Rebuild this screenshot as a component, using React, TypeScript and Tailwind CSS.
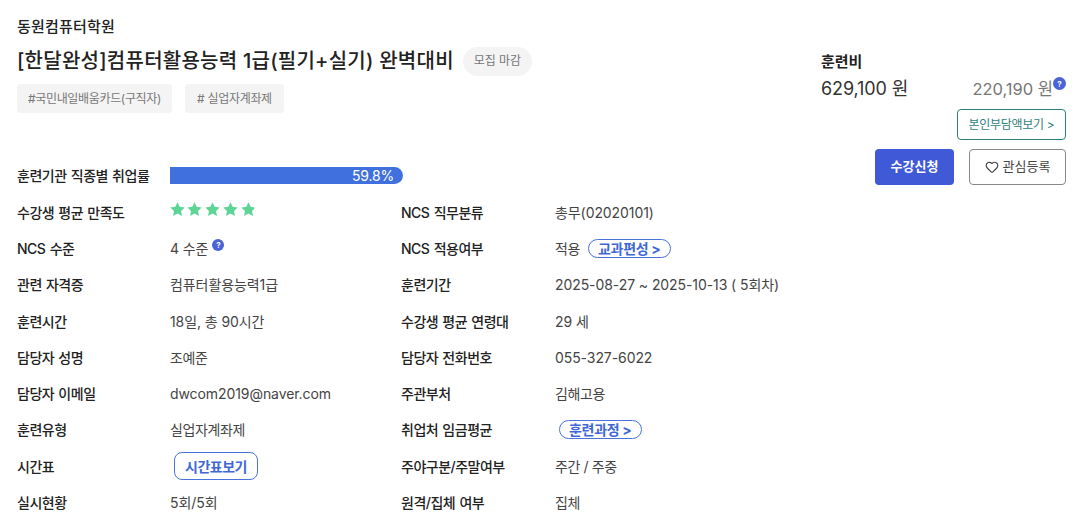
import React from 'react';
import { Heart } from 'lucide-react';

const font = 'font-["Inter","Noto_Sans_CJK_KR",sans-serif]';

const Help = ({ className = '', size = 'w-3 h-3' }: { className?: string; size?: string }) => (
  <span className={`inline-flex ${size} items-center justify-center rounded-full bg-[#4a63d8] text-white text-[8px] leading-none font-bold ${className}`}>
    ?
  </span>
);

const STAR = 'M12 .5L15.500 7.600 23.400 8.800 17.700 14.350 19.050 22.200 12 18.500 4.950 22.200 6.300 14.350 .6 8.800 8.500 7.600z';

const Star = ({ fill = '#5fd497' }: { fill?: string }) => (
  <svg viewBox="0 0 24 24" className="w-[15px] h-[15px]">
    <path d={STAR} fill={fill} />
  </svg>
);

const PartStar = () => (
  <svg viewBox="0 0 24 24" className="w-[15px] h-[15px]">
    <defs>
      <linearGradient id="part">
        <stop offset="0.86" stopColor="#5fd497" />
        <stop offset="0.86" stopColor="#dddddd" />
      </linearGradient>
    </defs>
    <path d={STAR} fill="url(#part)" />
  </svg>
);

const PillLink = ({ label }: { label: string }) => (
  <span className="inline-flex items-center h-[19px] px-[9px] rounded-full border border-[#4a73d9] text-[#3f68d6] text-[14px] tracking-[-0.3px] font-bold whitespace-nowrap">
    {label}
  </span>
);

const Label = ({ children }: { children: React.ReactNode }) => (
  <div className="text-[14px] tracking-[-0.5px] [word-spacing:1px] font-medium text-[#222] whitespace-nowrap">{children}</div>
);

const Value = ({ children }: { children: React.ReactNode }) => (
  <div className="flex items-center text-[14px] tracking-[-0.08px] text-[#444] whitespace-nowrap">{children}</div>
);

// Korean-only values sit a little tighter than the ones with digits
const Ko = ({ children }: { children: React.ReactNode }) => (
  <span className="tracking-[-0.4px]">{children}</span>
);

const rows: [string, React.ReactNode, string, React.ReactNode][] = [
  [
    '수강생 평균 만족도',
    <div className="flex gap-[2.800px] -mt-[6px] -ml-[0.500px]">
      <Star /><Star /><Star /><Star /><PartStar />
    </div>,
    'NCS 직무분류',
    '총무(02020101)',
  ],
  [
    'NCS 수준',
    <>4 수준<Help className="ml-[4px] -mt-[6px]" /></>,
    'NCS 적용여부',
    <><Ko>적용</Ko><span className="ml-[8px]"><PillLink label="교과편성 >" /></span></>,
  ],
  ['관련 자격증', '컴퓨터활용능력1급', '훈련기간', '2025-08-27 ~ 2025-10-13 ( 5회차)'],
  ['훈련시간', '18일, 총 90시간', '수강생 평균 연령대', '29 세'],
  ['담당자 성명', <Ko>조예준</Ko>, '담당자 전화번호', '055-327-6022'],
  ['담당자 이메일', 'dwcom2019@naver.com', '주관부처', <Ko>김해고용</Ko>],
  [
    '훈련유형',
    <Ko>실업자계좌제</Ko>,
    '취업처 임금평균',
    <span className="ml-[4px]"><PillLink label="훈련과정 >" /></span>,
  ],
  [
    '시간표',
    <span className="ml-[4px] inline-flex items-center h-[28px] px-[10px] rounded-[8px] border border-[#4a73d9] text-[#3f68d6] text-[14px] tracking-[-0.5px] font-bold">
      시간표보기
    </span>,
    '주야구분/주말여부',
    <Ko>주간 / 주중</Ko>,
  ],
  ['실시현황', '5회/5회', '원격/집체 여부', <Ko>집체</Ko>],
];

export default function App() {
  return (
    <div className={`${font} w-[1091px] h-[527px] overflow-hidden bg-white pl-[17px] pr-[25px]`}>
      <div className="flex justify-between">
        <div className="pt-[17px]">
          <div className="text-[15px] leading-[20px] tracking-[0.2px] font-medium text-[#222]">동원컴퓨터학원</div>
          <div className="flex items-center mt-[9px]">
            <h1 className="text-[20px] leading-[30px] tracking-[0.25px] font-medium text-[#222] whitespace-nowrap">
              [한달완성]컴퓨터활용능력 1급(필기+실기) 완벽대비
            </h1>
            <span className="ml-[9px] inline-flex items-center h-[29px] px-[11px] rounded-full bg-[#f4f4f4] text-[12px] tracking-[-0.1px] text-[#777]">
              모집 마감
            </span>
          </div>
          <div className="flex gap-[13px] mt-[8px]">
            <span className="inline-flex items-center h-[29px] px-[11px] rounded-[4px] bg-[#f4f4f4] text-[12px] tracking-[-0.34px] text-[#777]">
              #국민내일배움카드(구직자)
            </span>
            <span className="inline-flex items-center h-[29px] px-[12px] rounded-[4px] bg-[#f4f4f4] text-[12px] tracking-[-0.3px] text-[#777]">
              # 실업자계좌제
            </span>
          </div>
          <div className="flex items-center mt-[52px]">
            <div className="w-[153px] text-[14px] tracking-[-0.5px] [word-spacing:1px] font-medium text-[#222]">훈련기관 직종별 취업률</div>
            <div className="w-[233px] h-[17px] bg-[#4070dd] rounded-r-full flex items-center justify-end pr-[9px] text-white text-[14px] tracking-[-0.2px]">
              59.8%
            </div>
          </div>
        </div>

        <div className="w-[245px] pt-[51px]">
          <div className="text-[15px] leading-[22px] font-bold text-[#222]">훈련비</div>
          <div className="flex justify-between items-start mt-[3px]">
            <span className="text-[18px] leading-[26px] tracking-[-0.1px] text-[#333]">629,100 원</span>
            <span className="flex items-start text-[16.500px] leading-[26px] text-[#777]">
              220,190 원<Help className="mt-[1px]" size="w-[13px] h-[13px]" />
            </span>
          </div>
          <div className="flex justify-end mt-[7px]">
            <span className="inline-flex items-center justify-center w-[109px] h-[31px] rounded-[4px] border border-[#2f7f7c] text-[12px] tracking-[-0.3px] text-[#2f7f7c]">
              본인부담액보기 &gt;
            </span>
          </div>
          <div className="flex justify-end gap-[15px] mt-[9px]">
            <button className="w-[79px] h-[36px] rounded-[4px] bg-[#4059d6] text-white text-[13px] font-bold">
              수강신청
            </button>
            <button className="w-[97px] h-[36px] rounded-[4px] border border-[#888] text-[#444] text-[13px] flex items-center justify-center gap-[4px]">
              <Heart className="w-[14px] h-[14px]" strokeWidth={2} />
              관심등록
            </button>
          </div>
        </div>
      </div>

      <div className="grid grid-cols-[153px_231px_154px_1fr] auto-rows-[36.3px] items-center mt-[8px]">
        {rows.map(([l1, v1, l2, v2]) => (
          <React.Fragment key={l1}>
            <Label>{l1}</Label>
            <Value>{v1}</Value>
            <Label>{l2}</Label>
            <Value>{v2}</Value>
          </React.Fragment>
        ))}
      </div>
    </div>
  );
}
